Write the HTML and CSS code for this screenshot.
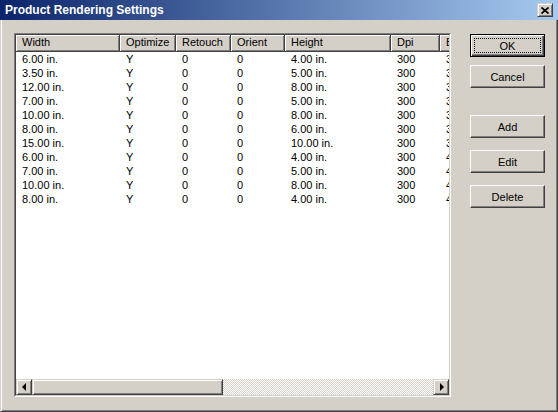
FILE: index.html
```html
<html>
<head>
  <title>Product Rendering Settings</title>
  <link rel="stylesheet" href="styles.css">
</head>
<body>
  <div class="dialog">
    <div class="titlebar">
      <span class="title">Product Rendering Settings</span>
      <button class="close-btn">
        <svg width="8" height="7" viewBox="0 0 8 7"><path d="M0.5 0.5 L7.5 6.5 M7.5 0.5 L0.5 6.5" stroke="#000" stroke-width="1.7" fill="none"/></svg>
      </button>
    </div>

    <div class="client">
      <div class="listview">
        <div class="lv-inner">
          <div class="lv-header lv-cols">
            <div class="lv-head">Width</div>
            <div class="lv-head">Optimize</div>
            <div class="lv-head">Retouch</div>
            <div class="lv-head">Orient</div>
            <div class="lv-head">Height</div>
            <div class="lv-head">Dpi</div>
            <div class="lv-head">Bits</div>
          </div>

          <div class="lv-body" id="lv-body"></div>

          <div class="hscroll">
            <div class="sb-btn"><span class="arrow-left"></span></div>
            <div class="sb-thumb"></div>
            <div class="sb-track"></div>
            <div class="sb-btn"><span class="arrow-right"></span></div>
          </div>
        </div>
      </div>

      <div class="actions">
        <button class="btn btn-default">OK</button>
        <button class="btn btn-cancel">Cancel</button>
        <button class="btn btn-add">Add</button>
        <button class="btn btn-next">Edit</button>
        <button class="btn btn-next">Delete</button>
      </div>
    </div>
  </div>

  <script>
    // width, height, bits for each rendering preset
    const presets = [
      ['6.00 in.', '4.00 in.', '32'],
      ['3.50 in.', '5.00 in.', '32'],
      ['12.00 in.', '8.00 in.', '32'],
      ['7.00 in.', '5.00 in.', '32'],
      ['10.00 in.', '8.00 in.', '32'],
      ['8.00 in.', '6.00 in.', '32'],
      ['15.00 in.', '10.00 in.', '32'],
      ['6.00 in.', '4.00 in.', '48'],
      ['7.00 in.', '5.00 in.', '48'],
      ['10.00 in.', '8.00 in.', '48'],
      ['8.00 in.', '4.00 in.', '48']
    ];

    const body = document.getElementById('lv-body');
    presets.forEach(p => {
      const row = document.createElement('div');
      row.className = 'lv-row lv-cols';
      [p[0], 'Y', '0', '0', p[1], '300', p[2]].forEach(text => {
        const cell = document.createElement('div');
        cell.className = 'lv-cell';
        cell.innerText = text;
        row.appendChild(cell);
      });
      body.appendChild(row);
    });
  </script>
</body>
</html>
```

FILE: styles.css
```css
html, body {
  margin: 0;
  padding: 0;
}
body {
  width: 558px;
  height: 412px;
  overflow: hidden;
}
.dialog {
  width: 558px;
  height: 412px;
  box-sizing: border-box;
  background-color: #d4d0c8;
  display: flex;
  flex-direction: column;
  font-family: "Liberation Sans", Arial, sans-serif;
  font-size: 11px;
  color: #000;
}

/* title bar */
.titlebar {
  height: 20px;
  flex: none;
  display: flex;
  align-items: center;
  padding: 0 5px;
  background: linear-gradient(to right, #0a246a, #a6caf0);
}
.title {
  flex: 1;
  color: white;
  font-weight: bold;
  font-size: 12px;
}
.close-btn {
  width: 16px;
  height: 14px;
  padding: 0;
  display: flex;
  align-items: center;
  justify-content: center;
  background-color: #d4d0c8;
  border: 1px solid;
  border-color: #d4d0c8 #404040 #404040 #d4d0c8;
  box-shadow: inset 1px 1px #fff, inset -1px -1px #808080;
}

/* client area */
.client {
  flex: 1;
  display: flex;
  align-items: flex-start;
  padding: 13px 0 0 13px;
  border: 1px solid;
  border-top: 0;
  border-color: transparent #404040 #404040 #d4d0c8;
  box-shadow: inset 1px 0 #fff, inset -1px -1px #808080;
}

/* list view */
.listview {
  width: 437px;
  height: 364px;
  box-sizing: border-box;
  border: 1px solid;
  border-color: #808080 #fff #fff #808080;
}
.lv-inner {
  height: 100%;
  box-sizing: border-box;
  border: 1px solid;
  border-color: #404040 #d4d0c8 #d4d0c8 #404040;
  background-color: white;
  overflow: hidden;
  display: flex;
  flex-direction: column;
}
.lv-cols {
  display: grid;
  grid-template-columns: 104px 56px 55px 54px 106px 49px 60px;
}
.lv-header {
  height: 17px;
  flex: none;
}
.lv-head {
  box-sizing: border-box;
  height: 17px;
  line-height: 15px;
  padding-left: 6px;
  background-color: #d4d0c8;
  border-right: 1px solid #404040;
  border-bottom: 1px solid #404040;
  box-shadow: inset 1px 1px #fff, inset -1px -1px #808080;
  white-space: nowrap;
  overflow: hidden;
}
.lv-body {
  flex: 1;
}
.lv-row {
  height: 14px;
  line-height: 14px;
}
.lv-cell {
  padding-left: 6px;
  white-space: nowrap;
  overflow: hidden;
}

/* horizontal scroll bar */
.hscroll {
  height: 16px;
  flex: none;
  display: flex;
}
.sb-btn, .sb-thumb {
  box-sizing: border-box;
  height: 16px;
  background-color: #d4d0c8;
  border: 1px solid;
  border-color: #d4d0c8 #404040 #404040 #d4d0c8;
  box-shadow: inset 1px 1px #fff, inset -1px -1px #808080;
}
.sb-btn {
  width: 16px;
  flex: none;
  display: flex;
  align-items: center;
  justify-content: center;
}
.sb-thumb {
  width: 191px;
  flex: none;
}
.sb-track {
  flex: 1;
  background: repeating-conic-gradient(#d4d0c8 0 25%, #fff 0 50%) 0 0 / 2px 2px;
}
.arrow-left {
  width: 0;
  height: 0;
  border-top: 4px solid transparent;
  border-bottom: 4px solid transparent;
  border-right: 4px solid #000;
  margin-left: -1px;
}
.arrow-right {
  width: 0;
  height: 0;
  border-top: 4px solid transparent;
  border-bottom: 4px solid transparent;
  border-left: 4px solid #000;
  margin-left: 1px;
}

/* dialog buttons */
.actions {
  margin-left: 19px;
  padding-top: 1px;
  display: flex;
  flex-direction: column;
}
.btn {
  position: relative;
  width: 75px;
  height: 23px;
  padding: 0;
  font-family: "Liberation Sans", Arial, sans-serif;
  font-size: 11px;
  color: #000;
  background-color: #d4d0c8;
  border: 1px solid;
  border-color: #fff #404040 #404040 #fff;
  box-shadow: inset -1px -1px #808080;
}
.btn-default {
  border-color: #000;
  box-shadow: inset 1px 1px #fff, inset -1px -1px #404040, inset -2px -2px #808080;
}
/* focus rectangle */
.btn-default::after {
  content: "";
  position: absolute;
  top: 3px;
  left: 3px;
  right: 3px;
  bottom: 3px;
  border: 1px dotted #000;
}
.btn-cancel {
  margin-top: 8px;
}
.btn-add {
  margin-top: 27px;
}
.btn-next {
  margin-top: 12px;
}
```
